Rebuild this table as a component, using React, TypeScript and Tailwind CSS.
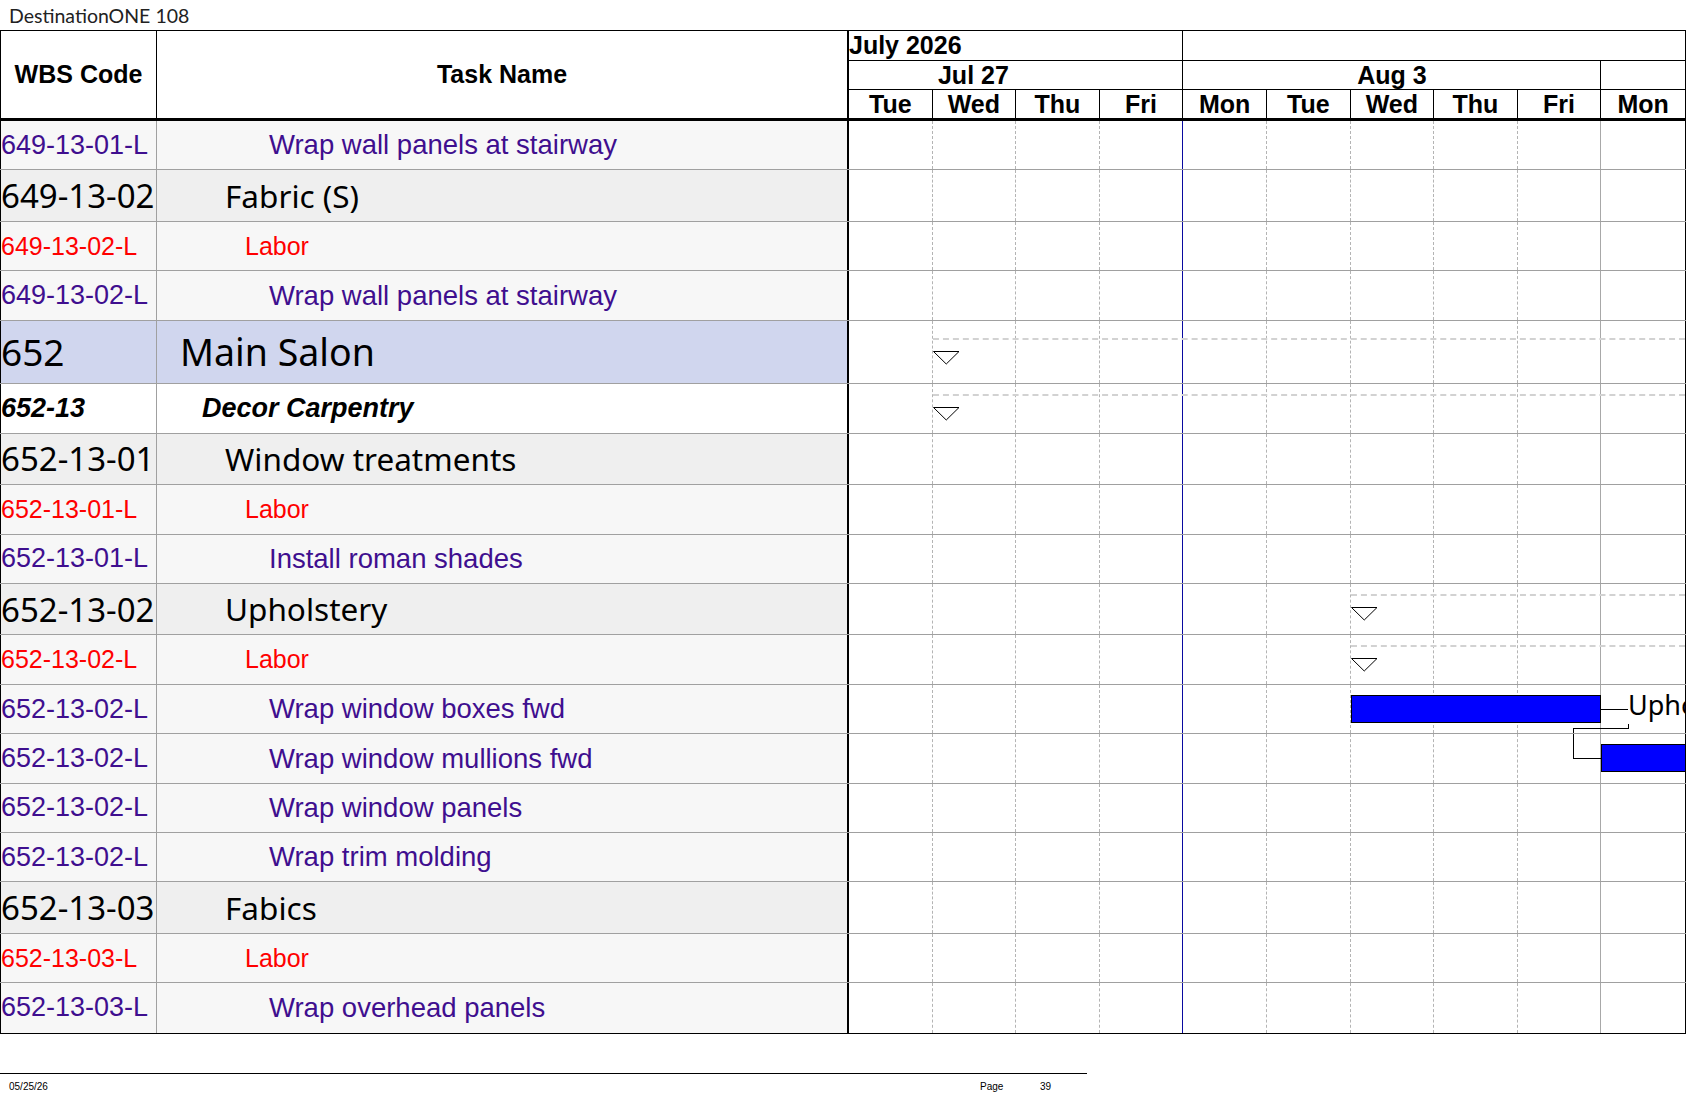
import React from "react";

type Kind = "task" | "labor" | "group" | "main" | "decor";

interface Row {
  code: string;
  name: string;
  kind: Kind;
  summary?: number;
  bar?: { from: number; to: number };
  label?: string;
  linkOut?: boolean;
  linkIn?: boolean;
}

const COL = 83.6;

const rows: Row[] = [
  { code: "649-13-01-L", name: "Wrap wall panels at stairway", kind: "task" },
  { code: "649-13-02", name: "Fabric (S)", kind: "group" },
  { code: "649-13-02-L", name: "Labor", kind: "labor" },
  { code: "649-13-02-L", name: "Wrap wall panels at stairway", kind: "task" },
  { code: "652", name: "Main Salon", kind: "main", summary: 1 },
  { code: "652-13", name: "Decor Carpentry", kind: "decor", summary: 1 },
  { code: "652-13-01", name: "Window treatments", kind: "group" },
  { code: "652-13-01-L", name: "Labor", kind: "labor" },
  { code: "652-13-01-L", name: "Install roman shades", kind: "task" },
  { code: "652-13-02", name: "Upholstery", kind: "group", summary: 6 },
  { code: "652-13-02-L", name: "Labor", kind: "labor", summary: 6 },
  { code: "652-13-02-L", name: "Wrap window boxes fwd", kind: "task", bar: { from: 6, to: 9 }, label: "Upholstery", linkOut: true },
  { code: "652-13-02-L", name: "Wrap window mullions fwd", kind: "task", bar: { from: 9, to: 12 }, linkIn: true },
  { code: "652-13-02-L", name: "Wrap window panels", kind: "task" },
  { code: "652-13-02-L", name: "Wrap trim molding", kind: "task" },
  { code: "652-13-03", name: "Fabics", kind: "group" },
  { code: "652-13-03-L", name: "Labor", kind: "labor" },
  { code: "652-13-03-L", name: "Wrap overhead panels", kind: "task" },
];

const kindStyle: Record<Kind, { row: string; bg: string; code: string; name: string }> = {
  task: {
    row: "h-[49.4px]",
    bg: "bg-[#f7f7f7]",
    code: "font-['Liberation_Sans',Arial,sans-serif] text-[27px] text-[#3f0f8f]",
    name: "font-['Liberation_Sans',Arial,sans-serif] text-[27.5px] text-[#3f0f8f] pl-[112px]",
  },
  labor: {
    row: "h-[49.4px]",
    bg: "bg-[#f7f7f7]",
    code: "font-['Liberation_Sans',Arial,sans-serif] text-[25px] text-[#ff0000]",
    name: "font-['Liberation_Sans',Arial,sans-serif] text-[25px] text-[#ff0000] pl-[88px]",
  },
  group: {
    row: "h-[51.5px]",
    bg: "bg-[#efefef]",
    code: "font-['Noto_Sans',sans-serif] text-[33px] text-black",
    name: "font-['Noto_Sans',sans-serif] text-[31.5px] text-black pl-[68px]",
  },
  main: {
    row: "h-[63.5px]",
    bg: "bg-[#d0d6ee]",
    code: "font-['Noto_Sans',sans-serif] text-[37px] text-black",
    name: "font-['Noto_Sans',sans-serif] text-[37.5px] text-black pl-[23px]",
  },
  decor: {
    row: "h-[49.5px]",
    bg: "bg-white",
    code: "font-['Liberation_Sans',Arial,sans-serif] text-[27px] font-bold italic text-black",
    name: "font-['Liberation_Sans',Arial,sans-serif] text-[27px] font-bold italic text-black pl-[45px]",
  },
};

// body grid lines, one per day column
const bodyCols = [
  "border-r border-dashed border-[#b4b4b4]",
  "border-r border-dashed border-[#b4b4b4]",
  "border-r border-dashed border-[#b4b4b4]",
  "border-r border-[#0a0aa0]",
  "border-r border-dashed border-[#b4b4b4]",
  "border-r border-dashed border-[#b4b4b4]",
  "border-r border-dashed border-[#b4b4b4]",
  "border-r border-dashed border-[#b4b4b4]",
  "border-r border-[#a8a8a8]",
  "",
];

const days = ["Tue", "Wed", "Thu", "Fri", "Mon", "Tue", "Wed", "Thu", "Fri", "Mon"];

function Triangle({ left, top }: { left: number; top: number }) {
  return (
    <svg className="absolute" style={{ left, top }} width="27" height="14" viewBox="0 0 27 14">
      <polygon points="0.5,0.5 26,0.5 13.25,13" fill="white" stroke="black" strokeWidth="1" />
    </svg>
  );
}

function ChartCell({ row, isMain }: { row: Row; isMain: boolean }) {
  const lineTop = isMain ? 17 : 10;
  const triTop = isMain ? 30 : 23;
  return (
    <div className="relative w-[837px] h-full flex border-r border-black overflow-hidden bg-white">
      {bodyCols.map((c, i) => (
        <div key={i} className={`w-[83.6px] shrink-0 h-full ${c}`} />
      ))}

      {row.summary !== undefined && (
        <>
          <div
            className="absolute right-0 border-t-2 border-dashed border-[#d2d2d2]"
            style={{ left: row.summary * COL, top: lineTop }}
          />
          <Triangle left={row.summary * COL} top={triTop} />
        </>
      )}

      {row.bar && (
        <div
          className="absolute top-[10px] h-[28px] bg-[#0000ff] border border-black"
          style={{ left: row.bar.from * COL, width: (row.bar.to - row.bar.from) * COL }}
        />
      )}

      {row.linkOut && (
        <>
          <div className="absolute top-[24px] h-px bg-black" style={{ left: 9 * COL, width: 779 - 9 * COL }} />
          <div className="absolute left-[779px] top-[6px] font-['Noto_Sans',sans-serif] text-[27px] leading-none whitespace-nowrap text-black">
            {row.label}
          </div>
          <div className="absolute left-[779px] top-[39px] w-px h-[5px] bg-black" />
          <div className="absolute left-[724px] top-[43px] w-[56px] h-px bg-black" />
          <div className="absolute left-[724px] top-[43px] w-px bottom-0 bg-black" />
        </>
      )}

      {row.linkIn && (
        <>
          <div className="absolute left-[724px] top-0 w-px h-[24px] bg-black" />
          <div className="absolute left-[724px] top-[24px] h-px bg-black" style={{ width: 9 * COL - 724 }} />
        </>
      )}
    </div>
  );
}

export default function App() {
  return (
    <div className="w-[1687px] h-[1097px] bg-white overflow-hidden text-black">
      <div className="h-[30px] flex items-center pl-[9px] pt-[1px] font-['Lato',sans-serif] text-[19.5px] text-[#222]">
        DestinationONE 108
      </div>

      <div className="w-[1686px] border-t border-b border-black">
        {/* header */}
        <div className="flex h-[90px] border-b-[3px] border-black font-['Liberation_Sans',Arial,sans-serif] font-bold text-[25px] leading-none">
          <div className="w-[157px] shrink-0 border-l border-r border-black flex items-center justify-center">
            WBS Code
          </div>
          <div className="w-[692px] shrink-0 border-r-2 border-black flex items-center justify-center">
            Task Name
          </div>
          <div className="w-[837px] shrink-0 border-r border-black flex flex-col">
            <div className="h-[30px] flex border-b border-black">
              <div className="w-[334.4px] shrink-0 border-r border-black flex items-center">July 2026</div>
              <div className="flex-1" />
            </div>
            <div className="h-[29px] flex border-b border-black">
              <div className="w-[334.4px] shrink-0 border-r border-black flex justify-end items-center overflow-hidden">
                <div className="w-[418px] shrink-0 text-center">Jul 27</div>
              </div>
              <div className="w-[418px] shrink-0 border-r border-black flex items-center justify-center">Aug 3</div>
              <div className="flex-1" />
            </div>
            <div className="flex-1 flex">
              {days.map((d, i) => (
                <div
                  key={i}
                  className={`w-[83.6px] shrink-0 flex items-center justify-center ${i < 9 ? "border-r border-black" : ""}`}
                >
                  {d}
                </div>
              ))}
            </div>
          </div>
        </div>

        {/* body */}
        {rows.map((r, i) => {
          const s = kindStyle[r.kind];
          const last = i === rows.length - 1;
          return (
            <div
              key={i}
              className={`flex ${s.row} ${last ? "" : "border-b border-[#a0a0a0]"}`}
            >
              <div className={`w-[157px] shrink-0 border-l border-l-black border-r border-r-[#a0a0a0] flex items-center overflow-hidden whitespace-nowrap leading-none ${s.bg} ${s.code}`}>
                {r.code}
              </div>
              <div className={`w-[692px] shrink-0 border-r-2 border-black flex items-center whitespace-nowrap leading-none ${s.bg} ${s.name}`}>
                {r.name}
              </div>
              <ChartCell row={r} isMain={r.kind === "main"} />
            </div>
          );
        })}
      </div>

      {/* footer */}
      <div className="mt-[39px] w-[1087px] border-t border-black flex pt-[7px] font-['Liberation_Sans',Arial,sans-serif] text-[10px] leading-[12px] text-black">
        <div className="w-[980px] shrink-0 pl-[9px]">05/25/26</div>
        <div className="w-[60px] shrink-0">Page</div>
        <div>39</div>
      </div>
    </div>
  );
}
